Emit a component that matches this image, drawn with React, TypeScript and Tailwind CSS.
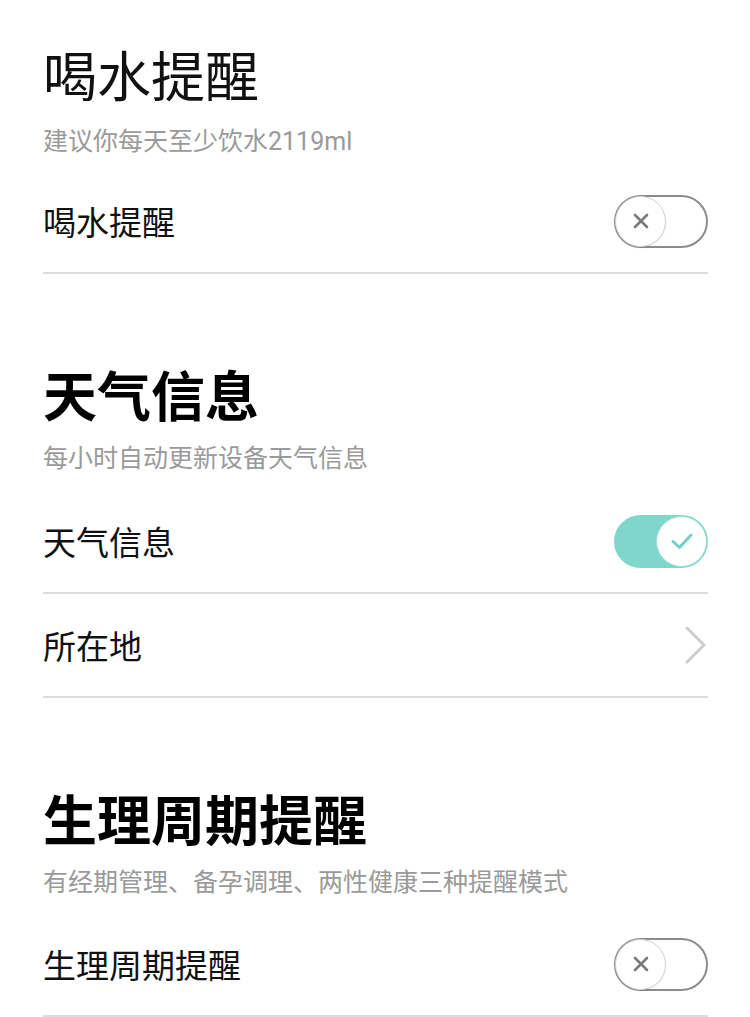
import React from "react";

function Toggle({ on }: { on: boolean }) {
  if (on) {
    return (
      <div className="relative w-[94px] h-[53px] rounded-full bg-[#7fd7cc] shrink-0">
        <div className="absolute right-[1px] top-[1px] w-[51px] h-[51px] rounded-full bg-white border border-[#9fe0d7] flex items-center justify-center">
          <svg width="24" height="20" viewBox="0 0 24 20" fill="none">
            <path d="M3 10.5 L9.5 16.5 L21 4" stroke="#72d0c4" strokeWidth="3" strokeLinecap="round" strokeLinejoin="round" />
          </svg>
        </div>
      </div>
    );
  }
  return (
    <div className="relative w-[94px] h-[53px] rounded-full bg-white border-2 border-[#8c8c8c] shrink-0">
      <div className="absolute left-[-1px] top-[-1px] w-[51px] h-[51px] rounded-full bg-white border border-[#d2d2d2] shadow-[0_1px_2px_rgba(0,0,0,0.08)] flex items-center justify-center">
        <svg width="16" height="16" viewBox="0 0 16 16" fill="none">
          <path d="M2 2 L14 14 M14 2 L2 14" stroke="#7a7a7a" strokeWidth="2.6" strokeLinecap="round" />
        </svg>
      </div>
    </div>
  );
}

function Chevron() {
  return (
    <svg width="22" height="38" viewBox="0 0 22 38" fill="none" className="mr-[1px]">
      <path d="M2 2 L19 19 L2 36" stroke="#cdcdcd" strokeWidth="3" strokeLinecap="round" strokeLinejoin="round" />
    </svg>
  );
}

function Row({ label, right }: { label: string; right: React.ReactNode }) {
  return (
    <div className="h-[104px] border-b-2 border-[#dcdcdc] flex items-center justify-between">
      <span className="text-[33px] leading-none text-[#111]">{label}</span>
      {right}
    </div>
  );
}

export default function App() {
  return (
    <div
      className="w-[750px] h-[1017px] overflow-hidden bg-white pl-[43px] pr-[42px]"
      style={{ fontFamily: '"Noto Sans CJK SC", "Noto Sans", sans-serif' }}
    >
      <h1 className="pt-[47px] text-[54px] leading-[54px] font-normal text-[#111]">喝水提醒</h1>
      <p
        className="mt-[28px] text-[25px] leading-[25px] text-[#9a9a9a]"
        style={{ fontFamily: 'Roboto, "Noto Sans CJK SC", sans-serif' }}
      >
        建议你每天至少饮水2119ml
      </p>
      <div className="mt-[16px]">
        <Row label="喝水提醒" right={<Toggle on={false} />} />
      </div>

      <h1 className="mt-[93px] text-[54px] leading-[54px] font-bold text-[#000]">天气信息</h1>
      <p className="mt-[23px] text-[25px] leading-[25px] text-[#9a9a9a]">每小时自动更新设备天气信息</p>
      <div className="mt-[21px]">
        <Row label="天气信息" right={<Toggle on={true} />} />
        <Row label="所在地" right={<Chevron />} />
      </div>

      <h1 className="mt-[93px] text-[54px] leading-[54px] font-bold text-[#000]">生理周期提醒</h1>
      <p className="mt-[23px] text-[25px] leading-[25px] text-[#9a9a9a]">有经期管理、备孕调理、两性健康三种提醒模式</p>
      <div className="mt-[20px]">
        <Row label="生理周期提醒" right={<Toggle on={false} />} />
      </div>
    </div>
  );
}
